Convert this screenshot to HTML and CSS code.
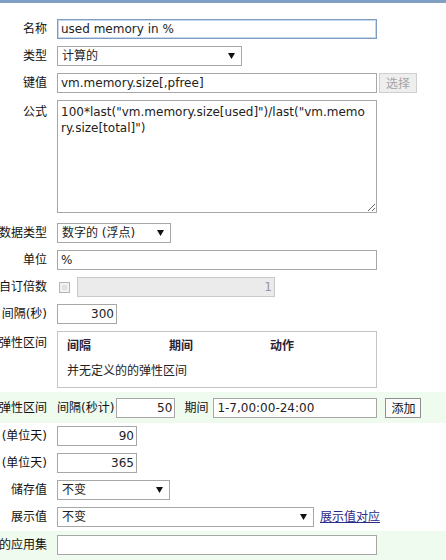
FILE: index.html
```html
<!DOCTYPE html>
<html lang="zh">
<head>
<meta charset="utf-8">
<link rel="stylesheet" href="styles.css">
</head>
<body>
<div class="topbar"></div>
<div class="form">
  <div class="row">
    <div class="label">名称</div>
    <input class="text w320 focus" value="used memory in %">
  </div>
  <div class="row">
    <div class="label">类型</div>
    <div class="select w185"><span>计算的</span><svg class="arrow" width="7" height="6" viewBox="0 0 7 6"><path d="M0 0H7L3.5 6Z"/></svg></div>
  </div>
  <div class="row">
    <div class="label">键值</div>
    <input class="text w320" value="vm.memory.size[,pfree]">
    <button class="btn disabled">选择</button>
  </div>
  <div class="row row-top row-formula">
    <div class="label">公式</div>
    <textarea class="formula">100*last("vm.memory.size[used]")/last("vm.memory.size[total]")</textarea>
  </div>
  <div class="row">
    <div class="label">数据类型</div>
    <div class="select w114"><span>数字的 (浮点)</span><svg class="arrow" width="7" height="6" viewBox="0 0 7 6"><path d="M0 0H7L3.5 6Z"/></svg></div>
  </div>
  <div class="row">
    <div class="label">单位</div>
    <input class="text w320" value="%">
  </div>
  <div class="row">
    <div class="label">自订倍数</div>
    <span class="checkbox"></span>
    <input class="text w198 num off" value="1" disabled>
  </div>
  <div class="row">
    <div class="label">间隔(秒)</div>
    <input class="text w60 num" value="300">
  </div>
  <div class="row row-top">
    <div class="label">弹性区间</div>
    <div class="intervals">
      <div class="ihead"><span>间隔</span><span>期间</span><span>动作</span></div>
      <div class="iempty">并无定义的的弹性区间</div>
    </div>
  </div>
  <div class="row green">
    <div class="label">弹性区间</div>
    <span class="inline">间隔(秒计)</span>
    <input class="text w59 num" value="50">
    <span class="inline gap">期间</span>
    <input class="text w164" value="1-7,00:00-24:00">
    <button class="btn add">添加</button>
  </div>
  <div class="row">
    <div class="label">(单位天)</div>
    <input class="text w80 num" value="90">
  </div>
  <div class="row">
    <div class="label">(单位天)</div>
    <input class="text w80 num" value="365">
  </div>
  <div class="row">
    <div class="label">储存值</div>
    <div class="select w113"><span>不变</span><svg class="arrow" width="7" height="6" viewBox="0 0 7 6"><path d="M0 0H7L3.5 6Z"/></svg></div>
  </div>
  <div class="row">
    <div class="label">展示值</div>
    <div class="select w257"><span>不变</span><svg class="arrow" width="7" height="6" viewBox="0 0 7 6"><path d="M0 0H7L3.5 6Z"/></svg></div>
    <a class="link" href="#">展示值对应</a>
  </div>
  <div class="row green last">
    <div class="label">的应用集</div>
    <input class="text w320" value="">
  </div>
</div>
</body>
</html>
```
FILE: styles.css
```css
html, body {
  margin: 0;
  padding: 0;
  background: #ffffff;
  overflow: hidden;
}
body {
  font-family: "DejaVu Sans", "Noto Sans CJK SC", sans-serif;
  font-size: 12px;
  color: #111;
}
.topbar {
  height: 3px;
  background: #809fc2;
}
.form {
  padding-top: 13px;
  display: flex;
  flex-direction: column;
}
.row {
  display: flex;
  align-items: center;
  padding: 3px 0 4px;
}
.row-top {
  align-items: flex-start;
}
.row-top .label {
  padding-top: 4px;
}
.row-formula {
  padding-bottom: 7px;
}
.label {
  width: 47px;
  flex: none;
  margin-right: 10px;
  display: flex;
  justify-content: flex-end;
  white-space: nowrap;
  line-height: 16px;
  color: #111;
}
.text {
  box-sizing: border-box;
  height: 20px;
  border: 1px solid #a7a7a7;
  padding: 0 3px;
  margin: 0;
  font-family: "DejaVu Sans", "Noto Sans CJK SC", sans-serif;
  font-size: 12px;
  color: #222;
  background: #fff;
  outline: none;
  border-radius: 0;
}
.text.focus {
  border-color: #7d9cc2;
  box-shadow: 0 0 0 1px #c7d6e8 inset;
}
.num {
  text-align: right;
  padding-right: 2px;
}
.off {
  background: #ebebeb;
  border-color: #c9c9c9;
  color: #999;
}
.w320 { width: 320px; }
.w198 { width: 198px; }
.w60 { width: 60px; }
.w59 { width: 59px; }
.w80 { width: 80px; }
.w164 { width: 164px; }
.w185 { width: 185px; }
.w114 { width: 114px; }
.w113 { width: 113px; }
.w257 { width: 257px; }
.select {
  box-sizing: border-box;
  height: 20px;
  border: 1px solid #a7a7a7;
  background: #fff;
  display: flex;
  align-items: center;
  justify-content: space-between;
  padding: 0 6px 0 4px;
  line-height: 16px;
  color: #222;
}
.arrow {
  fill: #111;
  flex: none;
}
.btn {
  box-sizing: border-box;
  height: 20px;
  margin: 0 0 0 2px;
  padding: 0 4px;
  font-family: "Noto Sans CJK SC", sans-serif;
  font-size: 12px;
  line-height: 16px;
  border-radius: 0;
}
.btn.disabled {
  width: 38px;
  background: #eeeeee;
  border: 1px solid #cfcfcf;
  color: #a5a5a5;
}
.btn.add {
  width: 36px;
  margin-left: 8px;
  background: #fbfbfb;
  border: 1px solid #8f8f8f;
  color: #111;
}
.formula {
  box-sizing: border-box;
  width: 320px;
  height: 113px;
  margin: 0;
  border: 1px solid #a7a7a7;
  padding: 3px 10px 3px 3px;
  font-family: "DejaVu Sans", "Noto Sans CJK SC", sans-serif;
  font-size: 12px;
  line-height: 16px;
  color: #222;
  word-break: break-all;
  overflow: hidden;
  outline: none;
}
.checkbox {
  box-sizing: border-box;
  width: 11px;
  height: 11px;
  margin: 0 7px 0 2px;
  border: 1px solid #b5b5b5;
  background: #e2e2e2;
  box-shadow: inset 0 0 0 2px #f2f2f2;
}
.intervals {
  box-sizing: border-box;
  width: 320px;
  height: 57px;
  border: 1px solid #c4c4c4;
  padding: 6px 9px 0;
  line-height: 16px;
}
.ihead {
  display: grid;
  grid-template-columns: 102px 101px auto;
  font-weight: bold;
  color: #2b2236;
}
.iempty {
  margin-top: 9px;
  color: #222;
}
.green {
  background: #effbee;
  padding: 6px 0 5px;
}
.green.last {
  padding: 4px 0 6px;
}
.inline {
  line-height: 16px;
  margin-right: 2px;
  white-space: nowrap;
}
.inline.gap {
  margin-left: 9px;
  margin-right: 5px;
}
.link {
  margin-left: 6px;
  color: #2a2a8a;
  text-decoration: underline;
  line-height: 16px;
}
```
